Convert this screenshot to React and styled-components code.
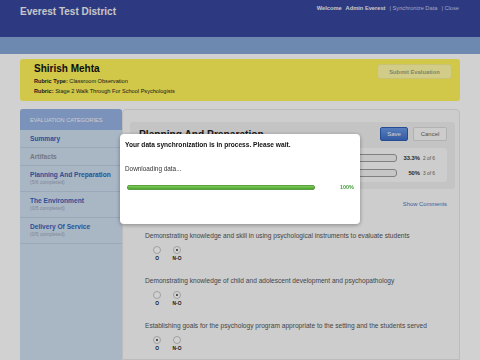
import React from 'react'
import styled, { createGlobalStyle } from 'styled-components'

const GlobalStyle = createGlobalStyle`
  html, body {
    margin: 0;
    padding: 0;
    background: #ffffff;
    font-family: 'Liberation Sans', Arial, Helvetica, sans-serif;
  }
  #root {
    width: 480px;
    height: 360px;
    overflow: hidden;
    position: relative;
  }
`

const categories = [
  { name: 'Summary' },
  { name: 'Artifacts', muted: true },
  { name: 'Planning And Preparation', note: '(5/6 completed)' },
  { name: 'The Environment', note: '(0/5 completed)' },
  { name: 'Delivery Of Service', note: '(0/5 completed)' },
]

const questions = [
  { text: 'Demonstrating knowledge and skill in using psychological instruments to evaluate students', pick: 'N-O' },
  { text: 'Demonstrating knowledge of child and adolescent development and psychopathology', pick: 'N-O' },
  { text: 'Establishing goals for the psychology program appropriate to the setting and the students served', pick: 'O' },
]

const progress = [
  { pct: '33.3%', count: '2 of 6', fill: 33 },
  { pct: '50%', count: '3 of 6', fill: 50 },
]

const App = () => {
  return (
    <>
      <GlobalStyle />
      <Page>
        <Header>
          <Title>Everest Test District</Title>
          <UserBar>
            <strong>Welcome</strong>
            <strong>Admin Everest</strong>
            <Link>| Synchronize Data</Link>
            <Link>| Close</Link>
          </UserBar>
        </Header>
        <Band />
        <Main>
          <InfoCard>
            <div>
              <Teacher>Shirish Mehta</Teacher>
              <Meta><b>Rubric Type:</b> Classroom Observation</Meta>
              <Meta><b>Rubric:</b> Stage 2 Walk Through For School Psychologists</Meta>
            </div>
            <SubmitButton>Submit Evaluation</SubmitButton>
          </InfoCard>
          <Body>
            <Sidebar>
              <SideHead>Evaluation Categories</SideHead>
              {categories.map((c) => (
                <SideItem key={c.name} tall={!!c.note}>
                  <SideName muted={c.muted}>{c.name}</SideName>
                  {c.note && <SideNote>{c.note}</SideNote>}
                </SideItem>
              ))}
            </Sidebar>
            <Content>
              <Panel>
                <PanelTop>
                  <PanelTitle>Planning And Preparation</PanelTitle>
                  <Buttons>
                    <Button primary>Save</Button>
                    <Button>Cancel</Button>
                  </Buttons>
                </PanelTop>
                <Stats>
                  {progress.map((p) => (
                    <StatRow key={p.pct}>
                      <Track>
                        <TrackFill style={{ width: p.fill + '%' }} />
                      </Track>
                      <Pct>{p.pct}</Pct>
                      <Count>{p.count}</Count>
                    </StatRow>
                  ))}
                </Stats>
              </Panel>
              <CommentsLink>Show Comments</CommentsLink>
              <Questions>
                {questions.map((q) => (
                  <Question key={q.text}>
                    <QText>{q.text}</QText>
                    <Choices>
                      {['O', 'N-O'].map((o) => (
                        <Choice key={o}>
                          <Radio checked={q.pick === o} />
                          <ChoiceLabel>{o}</ChoiceLabel>
                        </Choice>
                      ))}
                    </Choices>
                  </Question>
                ))}
              </Questions>
            </Content>
          </Body>
        </Main>
      </Page>
      <Overlay>
        <Dialog>
          <DialogTitle>Your data synchronization is in process. Please wait.</DialogTitle>
          <DialogText>Downloading data...</DialogText>
          <DialogProgress>
            <GreenBar />
            <GreenPct>100%</GreenPct>
          </DialogProgress>
        </Dialog>
      </Overlay>
    </>
  )
}

export default App

const Page = styled.div`
  width: 480px;
  height: 360px;
  display: flex;
  flex-direction: column;
`

const Header = styled.header`
  height: 37px;
  background: #37479f;
  display: flex;
  justify-content: space-between;
  align-items: flex-start;
  padding: 0 21px 0 20px;
`

const Title = styled.h1`
  margin: 6px 0 0;
  font-size: 10px;
  font-weight: bold;
  color: #f2f2f2;
`

const UserBar = styled.div`
  margin-top: 5px;
  display: flex;
  gap: 4px;
  font-size: 5.7px;
  color: #f4f4f4;
`

const Link = styled.span`
  color: #c2c8ea;
`

const Band = styled.div`
  height: 17px;
  background: #86a8d6;
`

const Main = styled.main`
  flex: 1;
  padding: 5px 20px 0;
  display: flex;
  flex-direction: column;
  min-height: 0;
`

const InfoCard = styled.section`
  height: 42px;
  box-sizing: border-box;
  background: #fff35a;
  border-radius: 3px;
  padding: 4px 8px 0 14px;
  display: flex;
  justify-content: space-between;
  align-items: flex-start;
`

const Teacher = styled.h2`
  margin: 0 0 3px;
  font-size: 10px;
  color: #111;
`

const Meta = styled.div`
  font-size: 5.6px;
  line-height: 9.5px;
  color: #222;
`

const SubmitButton = styled.button`
  margin-top: 1px;
  width: 75px;
  height: 15px;
  border: 1px solid #f5ec90;
  border-radius: 3px;
  background: #fffba8;
  color: #a39f7a;
  font-family: inherit;
  font-size: 5.8px;
  font-weight: bold;
  padding: 0;
`

const Body = styled.div`
  flex: 1;
  margin-top: 8px;
  display: flex;
  min-height: 0;
`

const Sidebar = styled.nav`
  width: 102px;
  background: #cfdef0;
  border-radius: 3px 3px 0 0;
  display: flex;
  flex-direction: column;
`

const SideHead = styled.div`
  height: 21px;
  background: #97b3e3;
  border-radius: 3px 3px 0 0;
  padding-left: 10px;
  display: flex;
  align-items: center;
  font-size: 5.6px;
  text-transform: uppercase;
  color: #f4f7fc;
`

const SideItem = styled.div`
  height: ${(p) => (p.tall ? '26px' : '18px')};
  box-sizing: border-box;
  padding: ${(p) => (p.tall ? '5px' : '0')} 0 0 10px;
  display: flex;
  flex-direction: column;
  justify-content: ${(p) => (p.tall ? 'flex-start' : 'center')};
  border-bottom: 1px solid #bdcde2;
`

const SideName = styled.div`
  font-size: 6.6px;
  font-weight: bold;
  color: ${(p) => (p.muted ? '#939393' : '#3464b8')};
`

const SideNote = styled.div`
  margin-top: 1px;
  font-size: 5px;
  color: #9aa7ba;
`

const Content = styled.section`
  flex: 1;
  background: #fafafa;
  border: 1px solid #e6e6e6;
  border-radius: 4px 4px 0 0;
  padding: 12px 4px 0 7px;
  display: flex;
  flex-direction: column;
`

const Panel = styled.div`
  background: #efefef;
  border-radius: 3px;
  padding: 5px 8px 7px 9px;
`

const PanelTop = styled.div`
  display: flex;
  justify-content: space-between;
  align-items: center;
`

const PanelTitle = styled.h3`
  margin: 0;
  font-size: 10.2px;
  color: #222;
`

const Buttons = styled.div`
  display: flex;
  gap: 5px;
`

const Button = styled.button`
  height: 14px;
  width: ${(p) => (p.primary ? '28px' : '34px')};
  padding: 0;
  border-radius: 2px;
  font-family: inherit;
  font-size: 6px;
  border: 1px solid ${(p) => (p.primary ? '#2f5fb4' : '#d8d8d8')};
  background: ${(p) => (p.primary ? 'linear-gradient(#6b9ae6, #3f6fc6)' : '#f9f9f9')};
  color: ${(p) => (p.primary ? '#fff' : '#666')};
`

const Stats = styled.div`
  margin-top: 7px;
  background: #fafafa;
  border-radius: 3px;
  padding: 6px 5px 5px 6px;
  display: flex;
  flex-direction: column;
  gap: 7px;
`

const StatRow = styled.div`
  display: flex;
  align-items: center;
`

const Track = styled.div`
  flex: 1;
  height: 6px;
  border: 1px solid #9d9d9d;
  border-radius: 3px;
  background: #f2f2f2;
  overflow: hidden;
`

const TrackFill = styled.div`
  height: 100%;
  background: #e3e3e3;
`

const Pct = styled.span`
  width: 23px;
  text-align: right;
  font-size: 5.8px;
  font-weight: bold;
  color: #333;
`

const Count = styled.span`
  width: 19px;
  padding-left: 3px;
  font-size: 4.8px;
  color: #666;
`

const CommentsLink = styled.div`
  align-self: flex-end;
  margin: 12px 8px 0 0;
  font-size: 5.8px;
  color: #4a75c4;
`

const Questions = styled.div`
  padding: 25px 0 0 15px;
  display: flex;
  flex-direction: column;
  gap: 16px;
`

const Question = styled.div`
  display: flex;
  flex-direction: column;
`

const QText = styled.div`
  font-size: 6.6px;
  color: #555;
`

const Choices = styled.div`
  margin-top: 7px;
  display: flex;
  gap: 8px;
  padding-left: 6px;
`

const Choice = styled.div`
  width: 12px;
  display: flex;
  flex-direction: column;
  align-items: center;
  gap: 2px;
`

const Radio = styled.span`
  width: 6px;
  height: 6px;
  border-radius: 50%;
  border: 1px solid #c4c4c4;
  background: #fff;
  display: flex;
  align-items: center;
  justify-content: center;
  &::after {
    content: '';
    width: 2px;
    height: 2px;
    border-radius: 50%;
    background: ${(p) => (p.checked ? '#333' : 'transparent')};
  }
`

const ChoiceLabel = styled.span`
  font-size: 4.8px;
  font-weight: bold;
  color: #222;
`

const Overlay = styled.div`
  position: fixed;
  inset: 0;
  background: rgba(0, 0, 0, 0.18);
`

const Dialog = styled.div`
  position: absolute;
  left: 120px;
  top: 134px;
  width: 240px;
  height: 90px;
  box-sizing: border-box;
  background: #fff;
  border-radius: 4px;
  box-shadow: 0 1px 4px rgba(0, 0, 0, 0.35);
  padding: 7px 5px 0;
`

const DialogTitle = styled.div`
  font-size: 6.6px;
  font-weight: bold;
  color: #111;
`

const DialogText = styled.div`
  margin-top: 17px;
  font-size: 6.4px;
  color: #333;
`

const DialogProgress = styled.div`
  margin-top: 12px;
  display: flex;
  align-items: center;
  padding-left: 2px;
`

const GreenBar = styled.div`
  width: 188px;
  height: 5px;
  border-radius: 2px;
  background: linear-gradient(#7fcd5a, #4ca42f);
  border: 1px solid #5e9e45;
  box-sizing: border-box;
`

const GreenPct = styled.span`
  margin-left: 25px;
  font-size: 5.4px;
  font-weight: bold;
  color: #45a03a;
`
